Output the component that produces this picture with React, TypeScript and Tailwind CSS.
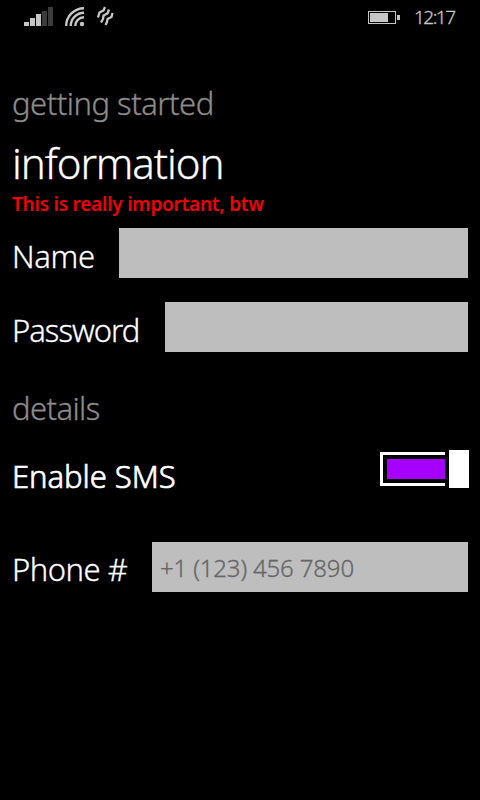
import React from "react";

function StatusBar() {
  return (
    <header className="flex h-[34px] items-start pl-6 pr-6">
      <svg className="mt-[7px]" width="30" height="20" viewBox="0 0 30 20">
        <g fill="#c6c6c6">
          <rect x="0" y="15" width="5" height="4" />
          <rect x="6" y="11" width="5" height="8" />
          <rect x="12" y="7" width="5" height="12" />
        </g>
        <g fill="#3c3c3c">
          <rect x="18" y="4" width="5" height="15" />
          <rect x="24" y="0" width="5" height="19" />
        </g>
      </svg>
      <svg className="ml-[11px] mt-[7px]" width="20" height="20" viewBox="0 0 20 20" fill="none" stroke="#c6c6c6" strokeWidth="2.4">
        <path d="M1.200 19A17.800 17.800 0 0 1 19 1.200" />
        <path d="M5.700 19A13.300 13.300 0 0 1 19 5.700" />
        <path d="M10.200 19A8.800 8.800 0 0 1 19 10.200" />
        <circle cx="17" cy="17" r="2.200" fill="#c6c6c6" stroke="none" />
      </svg>
      <svg className="ml-[11px] mt-[6px]" width="18" height="21" viewBox="0 0 18 21" fill="none" stroke="#c6c6c6" strokeWidth="2.300" strokeLinejoin="round">
        <path d="M9 1L7.500 4.500L3.500 6.500L2 11.500" />
        <path d="M13 3.500L11.500 7.500L7.500 9.500L7 13L5 16.500" />
        <path d="M16.500 7L15.500 11L11.500 13L11 16L9.500 19" />
      </svg>
      <svg className="ml-auto mt-[10px]" width="33" height="15" viewBox="0 0 33 15">
        <rect x="0.5" y="1.5" width="27" height="12" fill="none" stroke="#c6c6c6" />
        <rect x="2" y="3" width="18" height="9" fill="#c6c6c6" />
        <rect x="29" y="5" width="3" height="5" fill="#c6c6c6" />
      </svg>
      <span className="ml-[13px] w-[42px] text-[19px] leading-[34px] tracking-[-1.5px] text-[#c6c6c6]">12:17</span>
    </header>
  );
}

export default function App() {
  return (
    <main className="h-[800px] w-[480px] overflow-hidden whitespace-nowrap bg-black font-['Noto_Sans','Open_Sans',sans-serif] font-light text-white [-webkit-text-stroke:0.3px]">
      <StatusBar />
      <form className="px-3">
        <h2 className="mt-[49px] text-[31px] leading-10 tracking-[-0.5px] text-[#8c8c8c]">getting started</h2>
        <h1 className="mt-[13px] text-[42px] leading-[54px] tracking-[-1.05px]">information</h1>
        <p className="mt-px text-[19px] font-semibold leading-[26px] tracking-[-0.22px] text-[#f20000] [-webkit-text-stroke:0px]">This is really important, btw</p>
        <div className="mt-[11px] flex h-[50px]">
          <label className="w-[107px] text-[31px] leading-[56px] tracking-[-0.3px]">Name</label>
          <input className="min-w-0 flex-1 bg-[#bebebe]" />
        </div>
        <div className="mt-6 flex h-[50px]">
          <label className="w-[153px] text-[31px] leading-[56px] tracking-[-1px]">Password</label>
          <input type="password" className="min-w-0 flex-1 bg-[#bebebe]" />
        </div>
        <h2 className="mt-9 text-[31px] leading-10 tracking-[-0.6px] text-[#8c8c8c]">details</h2>
        <div className="mt-[22px] flex h-[50px] justify-between">
          <span className="text-[31px] leading-[52px] tracking-[-0.05px] [-webkit-text-stroke:0.7px]">Enable SMS</span>
          <div role="switch" aria-checked="true" className="-mr-px flex h-[38px] items-center gap-1">
            <div className="h-[34px] w-[65px] border-y-[3px] border-l-[3px] border-white py-1 pl-1">
              <div className="h-full bg-[#a600ff]" />
            </div>
            <div className="h-full w-5 bg-white" />
          </div>
        </div>
        <div className="mt-[42px] flex h-[50px]">
          <label className="w-[140px] text-[31px] leading-[55px] tracking-[-0.5px]">Phone #</label>
          <input placeholder="+1 (123) 456 7890" className="min-w-0 flex-1 bg-[#bebebe] px-2 pt-0.5 text-[24px] tracking-[-0.15px] placeholder:text-[#666666]" />
        </div>
      </form>
    </main>
  );
}
